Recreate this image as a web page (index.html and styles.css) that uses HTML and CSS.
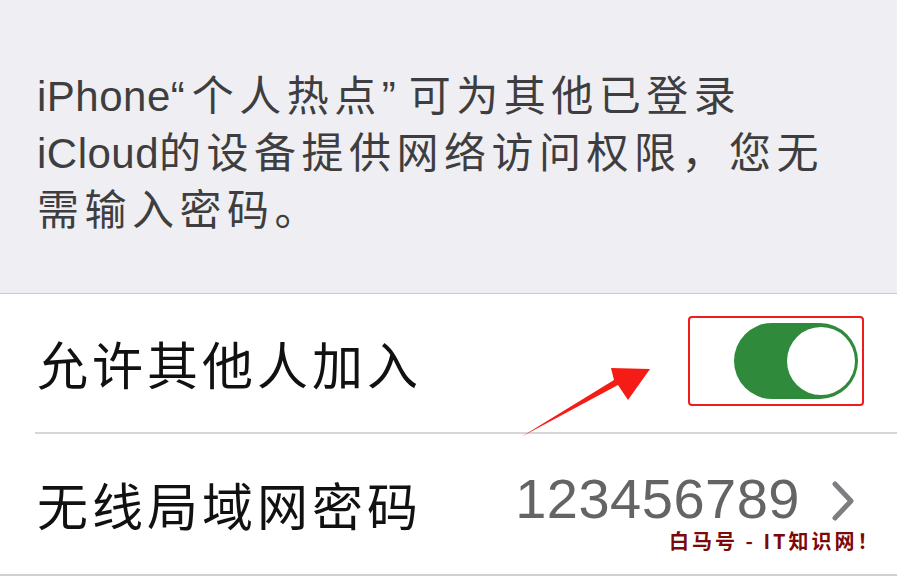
FILE: index.html
```html
<!DOCTYPE html>
<html lang="zh-CN">
<head>
  <meta charset="UTF-8">
  <title>个人热点</title>
  <link rel="stylesheet" href="styles.css">
</head>
<body>
  <div class="screen">

    <!-- 说明文字 -->
    <div class="note">
      <p><span class="latin">iPhone</span><span class="latin q-open">“</span>个人热点<span class="latin q-close">”</span>可为其他已登录<br><span class="latin">iCloud</span>的设备提供网络访问权限，您无<br>需输入密码。</p>
    </div>

    <div class="list">
      <div class="row">
        <span class="label">允许其他人加入</span>
        <div class="mark">
          <div class="switch on"><div class="knob"></div></div>
        </div>
      </div>
      <div class="row">
        <span class="label">无线局域网密码</span>
        <span class="value">123456789</span>
        <svg class="chevron" width="26" height="42" viewBox="0 0 26 42">
          <polyline points="5,4 21,21 5,38" fill="none" stroke="#7d7d82" stroke-width="5" stroke-linecap="round" stroke-linejoin="round"/>
        </svg>
      </div>
    </div>

    <!-- 标注箭头 -->
    <svg class="arrow" width="897" height="578" viewBox="0 0 897 578">
      <polygon points="521,437 618,385 628,400 650,369 611,368 614,380" fill="#f41c14"/>
    </svg>

    <div class="watermark">白马号 - IT知识网！</div>
  </div>
</body>
</html>
```

FILE: styles.css
```css
* {
  box-sizing: border-box;
}

html, body {
  margin: 0;
  padding: 0;
  background: #fff;
  font-family: "Noto Sans CJK SC", "Liberation Sans", sans-serif;
}

.screen {
  position: relative;
  width: 897px;
  height: 578px;
  overflow: hidden;
}

.note {
  height: 294px;
  background: #efeff3;
  border-bottom: 1px solid #c9c9ce;
  padding: 66px 0 0 37px;
}

.note p {
  margin: 0;
  font-size: 42px;
  line-height: 53px;
  letter-spacing: 5.5px;
  color: #3e3e40;
}

.note .latin {
  font-family: "Liberation Sans", "Noto Sans CJK SC", sans-serif;
  letter-spacing: 0.5px;
  font-size: 42px;
}

.note .q-open {
  letter-spacing: 7px;
}

.note .q-close {
  letter-spacing: 13px;
}

.list {
  background: #fff;
  border-bottom: 2px solid #d0d0d4;
}

.row {
  display: flex;
  align-items: center;
  height: 140px;
  margin-left: 35px;
  padding: 0 33px 0 2px;
  border-bottom: 2px solid #d6d6d8;
}

.row:last-child {
  border-bottom: none;
}

.label {
  flex: 1;
  font-size: 51px;
  letter-spacing: 4px;
  color: #111;
}

.mark {
  width: 176px;
  height: 90px;
  border: 2.5px solid #f01c1c;
  border-radius: 4px;
  display: flex;
  align-items: center;
  justify-content: flex-end;
  padding-right: 4px;
  margin-top: -4px;
}

.switch {
  width: 124px;
  height: 76px;
  border-radius: 38px;
  background: #2f8a3c;
  display: flex;
  align-items: center;
  justify-content: flex-end;
  padding-right: 3px;
}

.knob {
  width: 68px;
  height: 68px;
  border-radius: 50%;
  background: #fff;
}

.value {
  font-family: "Liberation Sans", sans-serif;
  font-size: 56px;
  line-height: 48px;
  color: #646466;
  letter-spacing: 0.5px;
  margin-right: 30px;
  margin-top: -10px;
}

.chevron {
  margin-top: -6px;
  margin-right: 8px;
}

.arrow {
  position: absolute;
  left: 0;
  top: 0;
  pointer-events: none;
}

.watermark {
  position: absolute;
  left: 669px;
  top: 531px;
  font-size: 20px;
  line-height: 20px;
  font-weight: 700;
  letter-spacing: 3px;
  color: #7c0808;
}
```
